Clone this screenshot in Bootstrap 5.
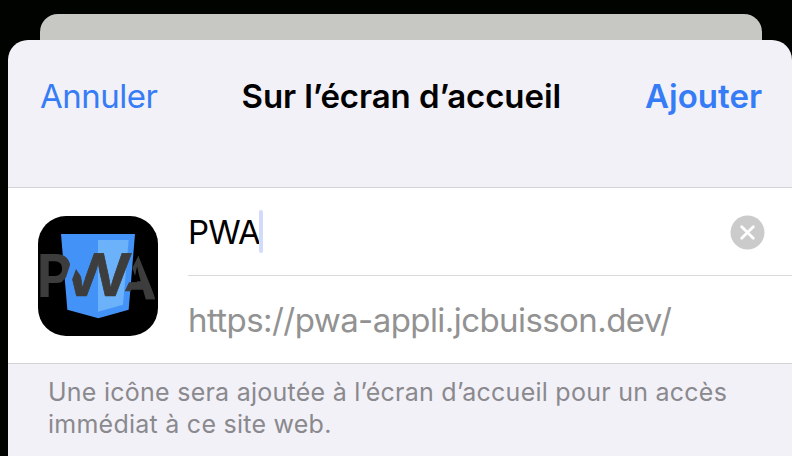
<!DOCTYPE html>
<html lang="fr">
<head>
<meta charset="utf-8">
<meta name="viewport" content="width=device-width, initial-scale=1">
<title>Sur l’écran d’accueil</title>
<link rel="stylesheet" href="https://cdn.jsdelivr.net/npm/bootstrap@5.3.0/dist/css/bootstrap.min.css">
<style>
  body { font-family: Inter, "Liberation Sans", sans-serif; background: #000300; height: 456px; padding-top: 14px; }
  .back-sheet { height: 26px; margin: 0 30px 0 40px; background: #c7c8c4; border-radius: 18px 18px 0 0; }
  .sheet { height: 416px; margin-left: 8px; background: #f2f1f7; border-radius: 20px 20px 0 0; }
  .sheet-head { height: 147px; padding: 31px 30px 0 32px; }
  .sheet-head a, .sheet-head h1 { font-size: 33px; line-height: 50px; color: #367cf7; }
  .sheet-head .cancel { letter-spacing: -.5px; }
  .sheet-head h1 { color: #000; letter-spacing: -.08px; }
  .fields { height: 177px; padding-left: 30px; border-top: 1px solid #d3d3d6; border-bottom: 1px solid #d3d3d6; }
  .app-icon { width: 120px; height: 120px; margin-right: 30px; }
  .field-row { height: 87px; font-size: 33px; line-height: 50px; }
  .name-row { padding: 1px 27px 0 0; color: #000; }
  .name-row .app-name { letter-spacing: -.8px; }
  .field-row + .field-row { height: 88px; border-top: 1px solid #dadada; padding-top: 1px; }
  .caret { width: 4px; height: 43px; margin: 0 0 2px -1px; border-radius: 2px; background: #d2dbfa; }
  .url { color: #929292; letter-spacing: -.57px; }
  .note { padding: 12px 30px 0 40px; font-size: 25px; line-height: 32px; letter-spacing: .25px; color: #8a898e; }
  .logo-text { font: 700 176px Inter, sans-serif; fill: #3d3d3d; }
  .logo-w { font-weight: 600; }
</style>
<script src="https://cdn.jsdelivr.net/npm/bootstrap@5.3.0/dist/js/bootstrap.bundle.min.js"></script>
</head>
<body class="overflow-hidden">
<div class="back-sheet"></div>
<main class="sheet overflow-hidden">
  <header class="sheet-head d-flex justify-content-between align-items-start text-nowrap">
    <a class="cancel text-decoration-none" href="#">Annuler</a>
    <h1 class="m-0 fw-semibold">Sur l’écran d’accueil</h1>
    <a class="text-decoration-none fw-semibold" href="#">Ajouter</a>
  </header>
  <section class="fields bg-white d-flex align-items-center">
    <svg class="app-icon flex-shrink-0" viewBox="24 21 360 360" aria-label="PWA">
      <defs>
        <clipPath id="clipP"><path d="M24 120H116L126 151L108 205L24 300Z"/></clipPath>
        <clipPath id="clipW"><path d="M119 232L138 180L162 216L180 120H320V280H130Z"/></clipPath>
        <clipPath id="clipA"><path d="M325 140L378 272H338L330 247H284L297 220H322L307 177Z"/></clipPath>
      </defs>
      <rect x="24" y="21" width="360" height="360" rx="84"/>
      <path fill="#4292f7" d="M93 75H315L296 302L205 328L112 302Z"/>
      <path fill="#6bb2fa" d="M204 93H296L279 287L204 308Z"/>
      <g clip-path="url(#clipP)"><text class="logo-text" x="20" y="263" textLength="108" lengthAdjust="spacingAndGlyphs">P</text></g>
      <g clip-path="url(#clipA)"><text class="logo-text" x="267" y="269" textLength="110" lengthAdjust="spacingAndGlyphs" stroke="#3d3d3d" stroke-width="5">A</text></g>
      <g clip-path="url(#clipW)"><text class="logo-text logo-w" transform="translate(95 262) skewX(-4)" textLength="205" lengthAdjust="spacingAndGlyphs" stroke="#3d3d3d" stroke-width="2">W</text></g>
    </svg>
    <div class="flex-grow-1">
      <div class="field-row name-row d-flex align-items-center">
        <span class="app-name">PWA</span>
        <span class="caret"></span>
        <svg class="ms-auto" width="35" height="35" viewBox="0 0 35 35" aria-label="Effacer"><circle cx="17.5" cy="17.5" r="17" fill="#cbcbcb"/><path d="M11.7 11.7L23.3 23.3M23.3 11.7L11.7 23.3" stroke="#fff" stroke-width="2.8" stroke-linecap="round"/></svg>
      </div>
      <div class="field-row url d-flex align-items-center">
        <span>https://pwa-appli.jcbuisson.dev/</span>
      </div>
    </div>
  </section>
  <p class="note m-0">Une icône sera ajoutée à l’écran d’accueil pour un accès<br>immédiat à ce site web.</p>
</main>
</body>
</html>
